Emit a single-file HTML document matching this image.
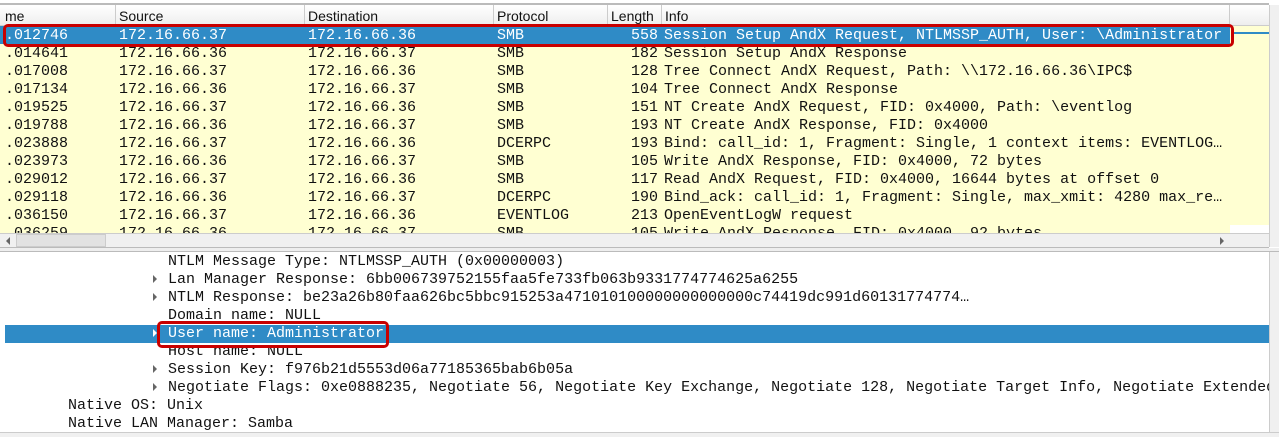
<!DOCTYPE html>
<html><head><style>
*{margin:0;padding:0;box-sizing:border-box}
body{width:1279px;height:437px;overflow:hidden;background:#fff;position:relative;font-family:"Liberation Mono",monospace;font-size:15px;color:#111}
.a{position:absolute;white-space:pre}
.hdr{position:absolute;top:3px;left:0;width:1269px;height:23px;background:linear-gradient(#fff,#eee);border-top:2px solid #bbb;border-bottom:1px solid #ccc;font-family:"Liberation Sans",sans-serif;font-size:14px}
.hdr span{position:absolute;top:3px}
.hdr i{position:absolute;top:0;width:1px;height:22px;background:#ccc}
.list{position:absolute;top:26px;left:0;width:1230px;height:207px;background:#ffffd2;overflow:hidden}
.row{position:absolute;left:0;width:1230px;height:18px;line-height:20px;white-space:pre}
.row span{position:absolute;top:0}
.sel{background:#2f8bc6;color:#fff}
.red{position:absolute;border:3px solid #c80000;border-radius:5px}
.d{position:absolute;height:18px;line-height:20px;white-space:pre}
.tri{position:absolute;width:0;height:0;border-top:4px solid transparent;border-bottom:4px solid transparent;border-left:4px solid #666}
</style></head><body>
<div class="hdr">
<span style="left:5px">me</span><i style="left:115px"></i>
<span style="left:119px">Source</span><i style="left:304px"></i>
<span style="left:308px">Destination</span><i style="left:493px"></i>
<span style="left:497px">Protocol</span><i style="left:607px"></i>
<span style="left:611px">Length</span><i style="left:661px"></i>
<span style="left:665px">Info</span><i style="left:1229px"></i>
</div>
<div style="position:absolute;left:1230px;top:26px;width:39px;height:199px;background:#ffffd2"></div>
<div style="position:absolute;left:1233px;top:32px;width:36px;height:2px;background:#2f8bc6"></div>
<div style="position:absolute;left:1269px;top:5px;width:10px;height:242px;background:#f0f0f0;border-left:1px solid #ccc"></div>
<div class="list">
<div class="row sel" style="top:0"><span style="left:5px">.012746</span><span style="left:119px">172.16.66.37</span><span style="left:308px">172.16.66.36</span><span style="left:497px">SMB</span><span style="left:631px">558</span><span style="left:664px">Session Setup AndX Request, NTLMSSP_AUTH, User: \Administrator</span></div>
<div class="row" style="top:18px"><span style="left:5px">.014641</span><span style="left:119px">172.16.66.36</span><span style="left:308px">172.16.66.37</span><span style="left:497px">SMB</span><span style="left:631px">182</span><span style="left:664px">Session Setup AndX Response</span></div>
<div class="row" style="top:36px"><span style="left:5px">.017008</span><span style="left:119px">172.16.66.37</span><span style="left:308px">172.16.66.36</span><span style="left:497px">SMB</span><span style="left:631px">128</span><span style="left:664px">Tree Connect AndX Request, Path: \\172.16.66.36\IPC$</span></div>
<div class="row" style="top:54px"><span style="left:5px">.017134</span><span style="left:119px">172.16.66.36</span><span style="left:308px">172.16.66.37</span><span style="left:497px">SMB</span><span style="left:631px">104</span><span style="left:664px">Tree Connect AndX Response</span></div>
<div class="row" style="top:72px"><span style="left:5px">.019525</span><span style="left:119px">172.16.66.37</span><span style="left:308px">172.16.66.36</span><span style="left:497px">SMB</span><span style="left:631px">151</span><span style="left:664px">NT Create AndX Request, FID: 0x4000, Path: \eventlog</span></div>
<div class="row" style="top:90px"><span style="left:5px">.019788</span><span style="left:119px">172.16.66.36</span><span style="left:308px">172.16.66.37</span><span style="left:497px">SMB</span><span style="left:631px">193</span><span style="left:664px">NT Create AndX Response, FID: 0x4000</span></div>
<div class="row" style="top:108px"><span style="left:5px">.023888</span><span style="left:119px">172.16.66.37</span><span style="left:308px">172.16.66.36</span><span style="left:497px">DCERPC</span><span style="left:631px">193</span><span style="left:664px">Bind: call_id: 1, Fragment: Single, 1 context items: EVENTLOG…</span></div>
<div class="row" style="top:126px"><span style="left:5px">.023973</span><span style="left:119px">172.16.66.36</span><span style="left:308px">172.16.66.37</span><span style="left:497px">SMB</span><span style="left:631px">105</span><span style="left:664px">Write AndX Response, FID: 0x4000, 72 bytes</span></div>
<div class="row" style="top:144px"><span style="left:5px">.029012</span><span style="left:119px">172.16.66.37</span><span style="left:308px">172.16.66.36</span><span style="left:497px">SMB</span><span style="left:631px">117</span><span style="left:664px">Read AndX Request, FID: 0x4000, 16644 bytes at offset 0</span></div>
<div class="row" style="top:162px"><span style="left:5px">.029118</span><span style="left:119px">172.16.66.36</span><span style="left:308px">172.16.66.37</span><span style="left:497px">DCERPC</span><span style="left:631px">190</span><span style="left:664px">Bind_ack: call_id: 1, Fragment: Single, max_xmit: 4280 max_re…</span></div>
<div class="row" style="top:180px"><span style="left:5px">.036150</span><span style="left:119px">172.16.66.37</span><span style="left:308px">172.16.66.36</span><span style="left:497px">EVENTLOG</span><span style="left:631px">213</span><span style="left:664px">OpenEventLogW request</span></div>
<div class="row" style="top:198px"><span style="left:5px">.036259</span><span style="left:119px">172.16.66.36</span><span style="left:308px">172.16.66.37</span><span style="left:497px">SMB</span><span style="left:631px">105</span><span style="left:664px">Write AndX Response, FID: 0x4000, 92 bytes</span></div>
</div>
<div style="position:absolute;left:0;top:233px;width:1269px;height:15px;background:#f0f0f0;border-top:1px solid #ccc;border-bottom:1px solid #bbb"></div>
<div style="position:absolute;left:16px;top:234px;width:90px;height:13px;background:#e2e2e2;border:1px solid #ccc"></div>
<div class="tri" style="left:6px;top:237px;border-left:none;border-right:4px solid #666"></div>
<div class="tri" style="left:1220px;top:237px"></div>
<div style="position:absolute;left:0;top:248px;width:1279px;height:4px;background:#eee;border-bottom:1px solid #bbb"></div>
<div style="position:absolute;left:1269px;top:252px;width:10px;height:180px;background:#f0f0f0;border-left:1px solid #ccc"></div>
<div style="position:absolute;left:0;top:432px;width:1279px;height:5px;background:#f0f0f0;border-top:1px solid #ccc"></div>
<div style="position:absolute;left:5px;top:325px;width:1264px;height:18px;background:#2f8bc6"></div>
<div class="d" style="left:168px;top:252px">NTLM Message Type: NTLMSSP_AUTH (0x00000003)</div>
<div class="tri" style="left:153px;top:275px"></div><div class="d" style="left:168px;top:270px">Lan Manager Response: 6bb006739752155faa5fe733fb063b9331774774625a6255</div>
<div class="tri" style="left:153px;top:293px"></div><div class="d" style="left:168px;top:288px">NTLM Response: be23a26b80faa626bc5bbc915253a471010100000000000000c74419dc991d60131774774…</div>
<div class="d" style="left:168px;top:306px">Domain name: NULL</div>
<div class="tri" style="left:153px;top:329px;border-left-color:#fff"></div><div class="d" style="left:168px;top:324px;color:#fff">User name: Administrator</div>
<div class="d" style="left:168px;top:342px">Host name: NULL</div>
<div class="tri" style="left:153px;top:365px"></div><div class="d" style="left:168px;top:360px">Session Key: f976b21d5553d06a77185365bab6b05a</div>
<div class="tri" style="left:153px;top:383px"></div><div class="d" style="left:168px;top:378px;width:1101px;overflow:hidden">Negotiate Flags: 0xe0888235, Negotiate 56, Negotiate Key Exchange, Negotiate 128, Negotiate Target Info, Negotiate Extended</div>
<div class="d" style="left:68px;top:396px">Native OS: Unix</div>
<div class="d" style="left:68px;top:414px">Native LAN Manager: Samba</div>
<div class="red" style="left:3px;top:24px;width:1231px;height:23px"></div>
<div class="red" style="left:157px;top:321px;width:232px;height:27px"></div>
</body></html>
